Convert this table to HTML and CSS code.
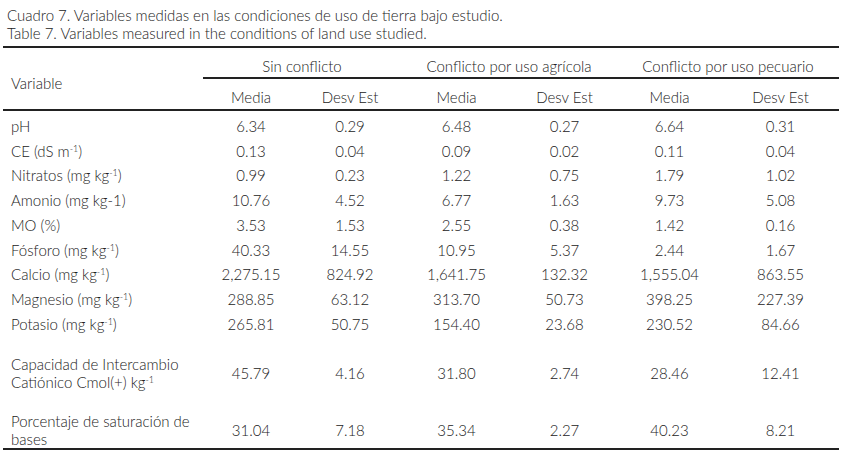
FILE: index.html
```html
<!DOCTYPE html>
<html lang="es">
<head>
<meta charset="utf-8">
<title>Cuadro 7</title>
<link rel="stylesheet" href="styles.css">
</head>
<body>
<div class="page">
  <p class="caption">Cuadro 7. Variables medidas en las condiciones de uso de tierra bajo estudio.<br>Table 7. Variables measured in the conditions of land use studied.</p>
  <table class="data">
    <colgroup>
      <col class="c-var">
      <col class="c1">
      <col class="c2">
      <col class="c3">
      <col class="c4">
      <col class="c5">
      <col class="c6">
    </colgroup>
    <thead>
      <tr class="groups">
        <th rowspan="2" class="var-head">Variable</th>
        <th colspan="2">Sin conflicto</th>
        <th colspan="2">Conflicto por uso agrícola</th>
        <th colspan="2">Conflicto por uso pecuario</th>
      </tr>
      <tr class="subs">
        <th>Media</th><th>Desv Est</th>
        <th>Media</th><th>Desv Est</th>
        <th>Media</th><th>Desv Est</th>
      </tr>
    </thead>
    <tbody>
      <tr class="first">
        <td class="label">pH</td>
        <td>6.34</td><td>0.29</td><td>6.48</td><td>0.27</td><td>6.64</td><td>0.31</td>
      </tr>
      <tr>
        <td class="label">CE (dS m<sup>-1</sup>)</td>
        <td>0.13</td><td>0.04</td><td>0.09</td><td>0.02</td><td>0.11</td><td>0.04</td>
      </tr>
      <tr>
        <td class="label">Nitratos (mg kg<sup>-1</sup>)</td>
        <td>0.99</td><td>0.23</td><td>1.22</td><td>0.75</td><td>1.79</td><td>1.02</td>
      </tr>
      <tr>
        <td class="label">Amonio (mg kg-1)</td>
        <td>10.76</td><td>4.52</td><td>6.77</td><td>1.63</td><td>9.73</td><td>5.08</td>
      </tr>
      <tr>
        <td class="label">MO (%)</td>
        <td>3.53</td><td>1.53</td><td>2.55</td><td>0.38</td><td>1.42</td><td>0.16</td>
      </tr>
      <tr>
        <td class="label">Fósforo (mg kg<sup>-1</sup>)</td>
        <td>40.33</td><td>14.55</td><td>10.95</td><td>5.37</td><td>2.44</td><td>1.67</td>
      </tr>
      <tr>
        <td class="label">Calcio (mg kg<sup>-1</sup>)</td>
        <td>2,275.15</td><td>824.92</td><td>1,641.75</td><td>132.32</td><td>1,555.04</td><td>863.55</td>
      </tr>
      <tr>
        <td class="label">Magnesio (mg kg<sup>-1</sup>)</td>
        <td>288.85</td><td>63.12</td><td>313.70</td><td>50.73</td><td>398.25</td><td>227.39</td>
      </tr>
      <tr>
        <td class="label">Potasio (mg kg<sup>-1</sup>)</td>
        <td>265.81</td><td>50.75</td><td>154.40</td><td>23.68</td><td>230.52</td><td>84.66</td>
      </tr>
      <tr class="tall cap">
        <td class="label">Capacidad de Intercambio<br>Catiónico Cmol(+) kg<sup>-1</sup></td>
        <td>45.79</td><td>4.16</td><td>31.80</td><td>2.74</td><td>28.46</td><td>12.41</td>
      </tr>
      <tr class="tall last">
        <td class="label">Porcentaje de saturación de<br>bases</td>
        <td>31.04</td><td>7.18</td><td>35.34</td><td>2.27</td><td>40.23</td><td>8.21</td>
      </tr>
    </tbody>
  </table>
</div>
</body>
</html>
```

FILE: styles.css
```css
html, body {
  margin: 0;
  padding: 0;
  background: #ffffff;
}

body {
  font-family: Lato, "Liberation Sans", sans-serif;
  font-weight: 300;
  font-size: 15px;
  color: #222222;
}

.page {
  padding: 6px 4px 0 3px;
}

.caption {
  margin: 0 0 0 4px;
  line-height: 18px;
}

.data {
  margin-top: 4px;
  border-collapse: separate;
  border-spacing: 0;
  table-layout: fixed;
  width: 836px;
}

.c-var { width: 200px; }
.c1 { width: 96px; }
.c2 { width: 102px; }
.c3 { width: 111px; }
.c4 { width: 105px; }
.c5 { width: 105px; }
.c6 { width: 117px; }

.data th {
  font-weight: 300;
  text-align: center;
  padding: 7px 0 0 0;
  line-height: 22px;
  vertical-align: top;
  white-space: nowrap;
}

.groups th {
  border-top: 2px solid #222222;
  border-bottom: 2px solid #222222;
}

.subs th {
  padding-bottom: 1px;
  border-bottom: 2px solid #222222;
}

.data th.var-head {
  text-align: left;
  padding: 24px 0 0 8px;
  vertical-align: top;
  border-bottom: 2px solid #222222;
}

.data td {
  padding: 0;
  line-height: 24.7px;
  text-align: center;
  vertical-align: middle;
  white-space: nowrap;
}

.data td.label {
  text-align: left;
  padding-left: 8px;
}

.first td {
  padding-top: 3px;
}

.tall td {
  line-height: 18px;
}

.cap td {
  padding-top: 18.5px;
  padding-bottom: 2px;
}

.last td {
  padding-top: 19px;
  padding-bottom: 0;
  border-bottom: 2px solid #222222;
}

sup {
  font-size: 0.6em;
  line-height: 0;
  vertical-align: 0.6em;
}
```
